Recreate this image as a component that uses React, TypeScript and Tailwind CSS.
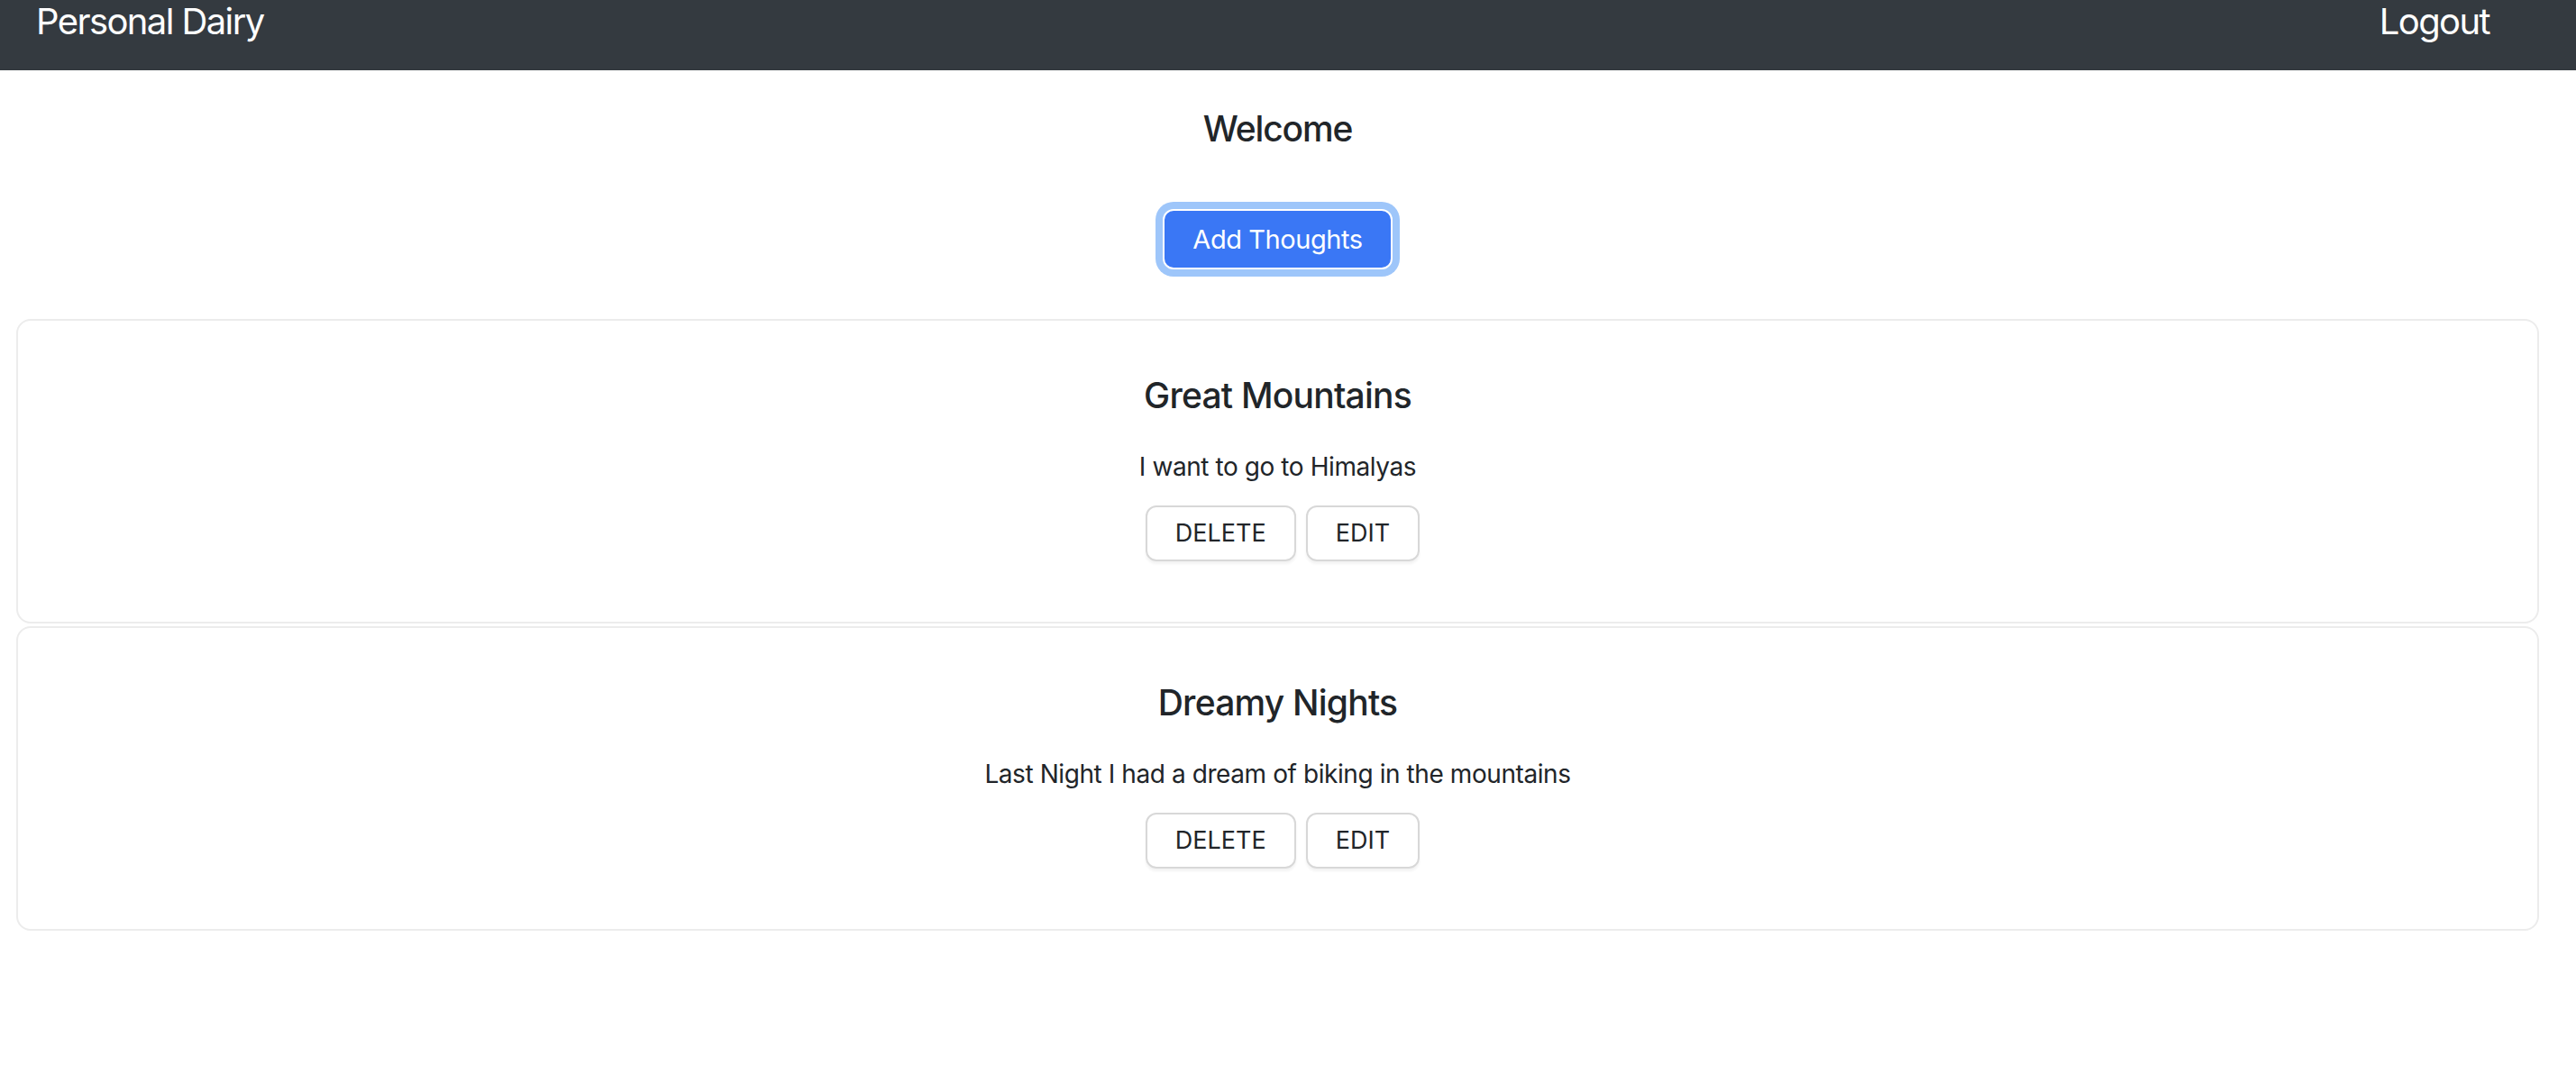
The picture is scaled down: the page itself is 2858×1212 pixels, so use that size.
const entries = [
  { title: 'Great Mountains', body: 'I want to go to Himalyas' },
  { title: 'Dreamy Nights', body: 'Last Night I had a dream of biking in the mountains' },
]

const App = () => {
  return (
    <div className="min-h-screen bg-white text-[#212529] font-['Inter','Liberation_Sans',sans-serif]">
      {/* Navbar */}
      <nav className="h-[78px] bg-[#343a40] flex items-start justify-between pl-[40px] pr-[96px] text-white text-[40px] leading-[48px] tracking-[-0.04em]">
        <span>Personal Dairy</span>
        <span>Logout</span>
      </nav>

      <div className="pl-[18px] pr-[41px]">
        <div className="flex flex-col items-center">
          <h1 className="mt-[41px] text-[39px] leading-[47px] font-medium tracking-[-0.03em]">Welcome</h1>
          <button className="mt-[66px] h-[67px] px-[31px] rounded-[12px] bg-[#3a77f5] text-white text-[29px] tracking-[-0.015em] border-2 border-white shadow-[0_0_0_8px_#9ec6fa]">
            Add Thoughts
          </button>
        </div>

        {/* Entries */}
        <div className="mt-[55px] flex flex-col gap-[3px]">
          {entries.map((entry, idx) => (
            <div
              key={idx}
              className="border-2 border-[#ececec] rounded-[16px] pt-[59px] pb-[67px] flex flex-col items-center"
            >
              <h2 className="text-[39px] leading-[47px] font-medium tracking-[-0.02em]">{entry.title}</h2>
              <p className="mt-[39px] text-[28px] leading-[34px] tracking-[-0.015em]">{entry.body}</p>
              <div className="mt-[26px] flex">
                <button className="ml-[11px] h-[62px] px-[31px] border-2 border-[#d8d8d8] rounded-[12px] text-[27px] shadow-[0_3px_3px_rgba(0,0,0,0.05)]">
                  DELETE
                </button>
                <button className="ml-[11px] h-[62px] px-[31px] border-2 border-[#d8d8d8] rounded-[12px] text-[27px] shadow-[0_3px_3px_rgba(0,0,0,0.05)]">
                  EDIT
                </button>
              </div>
            </div>
          ))}
        </div>
      </div>
    </div>
  )
}

export default App
